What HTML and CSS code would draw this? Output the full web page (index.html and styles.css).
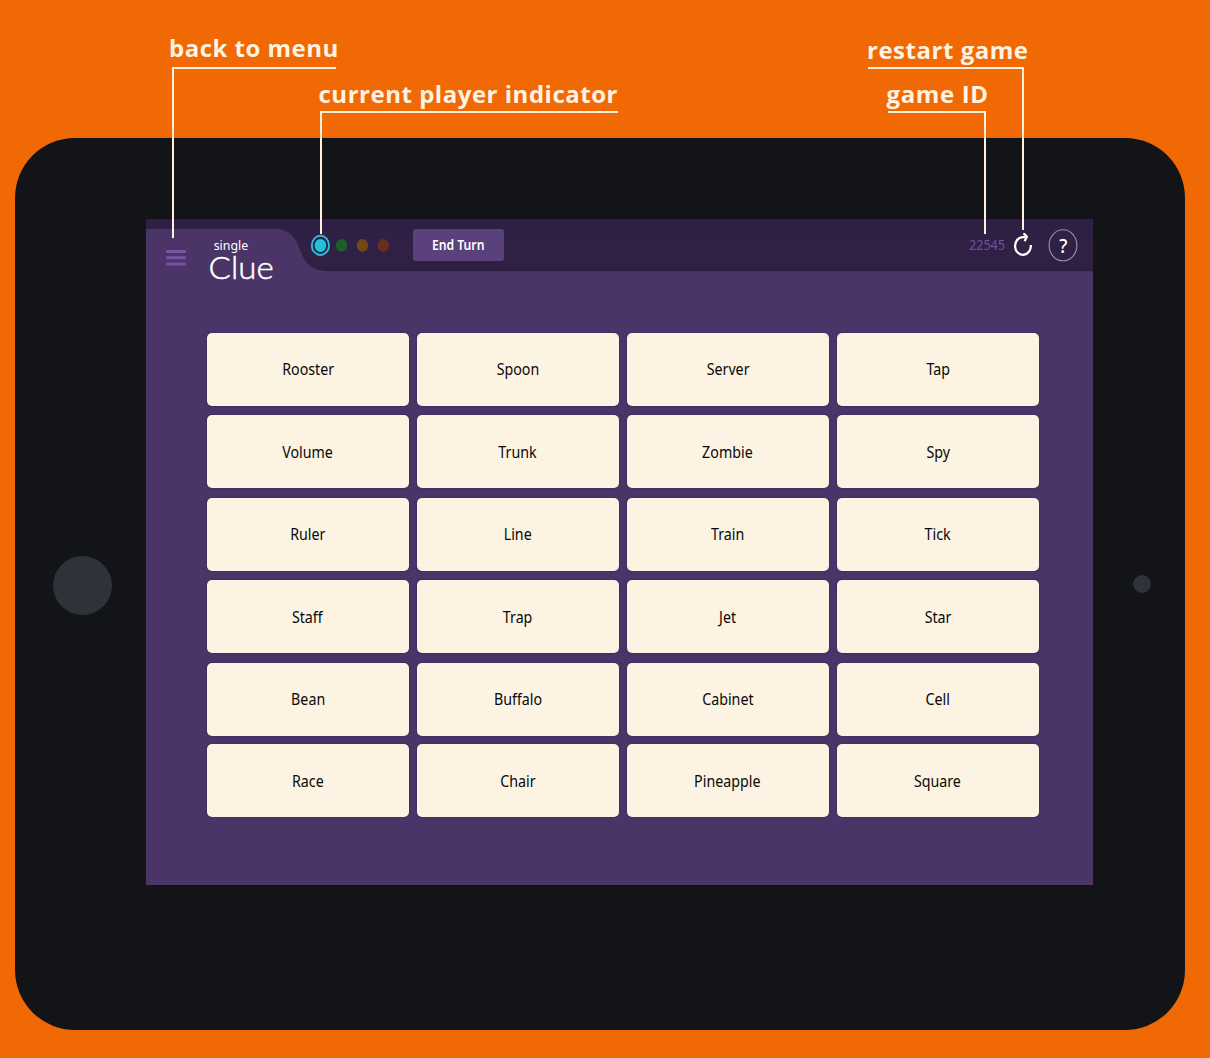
FILE: index.html
```html
<!DOCTYPE html>
<html lang="en">
<head>
<meta charset="utf-8">
<title>Single Clue</title>
<link rel="stylesheet" href="styles.css">
</head>
<body>
<main class="stage">
  <div class="tablet">
    <div class="bezel"><span class="home"></span></div>
    <div class="screen">
      <header class="topbar">
        <svg class="topbar-shape" width="947" height="68" viewBox="0 0 947 68" aria-hidden="true">
          <defs>
            <linearGradient id="bar" x1="0" y1="0" x2="0" y2="1"><stop offset="0" stop-color="#2e2045"/><stop offset=".85" stop-color="#302144"/><stop offset="1" stop-color="#2d1d40"/></linearGradient>
          </defs>
          <path d="M0 0H947V52.3H184C166 52.3 159 45 154 31C148 15 141 10 129 10H0Z" fill="url(#bar)"/>
        </svg>
        <svg class="menu" width="20" height="16" viewBox="0 0 20 16" fill="#7555a2" role="img" aria-label="Menu"><rect width="20" height="3" rx="1.2"/><rect y="6.2" width="20" height="3" rx="1.2"/><rect y="12.4" width="20" height="3" rx="1.2"/></svg>
        <svg class="logo" width="68" height="56" viewBox="0 0 68 56" fill="#fff"><text class="logo-small" x="4.7" y="16" textLength="34.5" lengthAdjust="spacingAndGlyphs">single</text><text class="logo-big" x="-.4" y="44.8" textLength="65" lengthAdjust="spacingAndGlyphs">Clue</text></svg>
        <svg class="players" width="82" height="22" viewBox="0 0 82 22" aria-hidden="true">
          <ellipse cx="10.4" cy="11.4" rx="8.6" ry="9.6" fill="none" stroke="#25c0da" stroke-width="1.9"/>
          <ellipse cx="10.4" cy="11.4" rx="5.8" ry="6.5" fill="#25c0da"/>
          <ellipse cx="31.4" cy="11.4" rx="5.7" ry="6.3" fill="#1b5e2b"/>
          <ellipse cx="52.4" cy="11.4" rx="5.7" ry="6.3" fill="#744719"/>
          <ellipse cx="73.4" cy="11.4" rx="5.7" ry="6.3" fill="#65301f"/>
        </svg>
        <button class="end-turn"><span>End Turn</span></button>
        <span class="game-id"><span>22545</span></span>
        <svg class="restart" width="20" height="24" viewBox="0 0 20 24" fill="none" stroke="#fff" role="img" aria-label="Restart"><path d="M17.8 12A7.9 8.8 0 1 1 9.4 4.2H12" stroke-width="2.3"/><path d="M10.6 .2L13.8 3.8L11.6 8.3" stroke-width="2.3"/></svg>
        <svg class="help" width="30" height="33" viewBox="0 0 30 33"><ellipse cx="15" cy="16.3" rx="13.9" ry="15.5" fill="none" stroke="#a18eac" stroke-width="1.1"/><text class="help-mark" x="11.2" y="23.6" textLength="8.2" lengthAdjust="spacingAndGlyphs">?</text></svg>
      </header>
      <section class="board">
        <div class="card"><span>Rooster</span></div><div class="card"><span>Spoon</span></div><div class="card"><span>Server</span></div><div class="card"><span>Tap</span></div>
        <div class="card"><span>Volume</span></div><div class="card"><span>Trunk</span></div><div class="card"><span>Zombie</span></div><div class="card"><span>Spy</span></div>
        <div class="card"><span>Ruler</span></div><div class="card"><span>Line</span></div><div class="card"><span>Train</span></div><div class="card"><span>Tick</span></div>
        <div class="card"><span>Staff</span></div><div class="card"><span>Trap</span></div><div class="card"><span>Jet</span></div><div class="card"><span>Star</span></div>
        <div class="card"><span>Bean</span></div><div class="card"><span>Buffalo</span></div><div class="card"><span>Cabinet</span></div><div class="card"><span>Cell</span></div>
        <div class="card"><span>Race</span></div><div class="card"><span>Chair</span></div><div class="card"><span>Pineapple</span></div><div class="card"><span>Square</span></div>
      </section>
    </div>
    <div class="bezel"><span class="camera"></span></div>
  </div>
  <svg class="callouts" width="1210" height="260" viewBox="0 0 1210 260">
    <g fill="none" stroke="#fff0dc" stroke-width="2">
      <path d="M336 68H173V238"/>
      <path d="M618 112H321V234"/>
      <path d="M868 68H1023V230"/>
      <path d="M888 112H985V234"/>
    </g>
    <g class="callout-text">
      <text x="169" y="57" textLength="169.3">back to menu</text>
      <text x="318.5" y="103" textLength="299">current player indicator</text>
      <text x="867" y="59" textLength="161">restart game</text>
      <text x="886.5" y="103" textLength="101.5">game ID</text>
    </g>
  </svg>
</main>
</body>
</html>
```

FILE: styles.css
```css
* { box-sizing: border-box; }

body {
  margin: 0;
  background: #f16904;
  font-family: "Noto Sans", "Open Sans", sans-serif;
}

.stage {
  position: relative;
  width: 1210px;
  height: 1058px;
  padding: 138.4px 25px 0 15px;
  overflow: hidden;
}

.tablet {
  display: grid;
  grid-template-columns: 131px 947px 92px;
  height: 892px;
  padding-top: 80.6px;
  border-radius: 60px;
  background: #121418;
}

.bezel {
  display: flex;
  justify-content: center;
  padding-top: 337px;
}

.home {
  width: 59px;
  height: 59px;
  margin-left: 4px;
  border-radius: 50%;
  background: #2f3239;
}

.camera {
  width: 18px;
  height: 18px;
  margin: 19.4px 0 0 6px;
  border-radius: 50%;
  background: #2f3239;
}

.screen {
  height: 666px;
  background: #4a3468;
}

.topbar {
  position: relative;
  display: flex;
  align-items: flex-start;
  height: 113.7px;
  padding-left: 20px;
}

.topbar > * { flex: none; position: relative; }

.topbar > .topbar-shape {
  position: absolute;
  top: 0;
  left: 0;
}

.menu { margin-top: 31px; }

.logo { margin: 15px 0 0 23px; }
.logo-small { font: 13px "Noto Sans", sans-serif; }
.logo-big { font: 300 32px Lato, sans-serif; stroke: #fff; stroke-width: .5px; }

.players { margin: 15px 0 0 33px; }

.end-turn {
  width: 91px;
  height: 32px;
  margin: 10px 0 0 21px;
  padding: 0;
  border: 0;
  border-radius: 3px;
  background: #5a417c;
  color: #fff;
  font: 600 14px/32px "Noto Sans", sans-serif;
}

.end-turn span { display: inline-block; transform: scaleX(.87); }

.game-id {
  width: 36px;
  margin: 16px 0 0 465px;
  color: #70519a;
  font-size: 14px;
  line-height: 20px;
}

.game-id span { display: inline-block; transform: scaleX(.9); transform-origin: left; }

.restart { margin: 14px 0 0 8px; }
.help { margin: 10px 0 0 15px; }
.help-mark { font: 500 20px "Noto Sans", sans-serif; fill: #fff; }

.board {
  display: grid;
  grid-template-columns: repeat(4, 201.5px);
  grid-template-rows: repeat(5, 82.5px) 73px;
  column-gap: 8.5px;
  padding-left: 61px;
}

.card {
  display: flex;
  align-items: center;
  justify-content: center;
  height: 73px;
  border-radius: 5px;
  background: #fcf3e3;
  box-shadow: 0 0 2px #37205a;
  color: #080808;
  font-size: 16px;
  line-height: 22px;
}

.card:nth-child(n + 21) { margin-top: -.8px; }

.card span { transform: scaleX(.89); }

.callouts {
  position: absolute;
  top: 0;
  left: 0;
}

.callout-text { font: 700 24px "Open Sans", sans-serif; fill: #fff3e2; }
```
